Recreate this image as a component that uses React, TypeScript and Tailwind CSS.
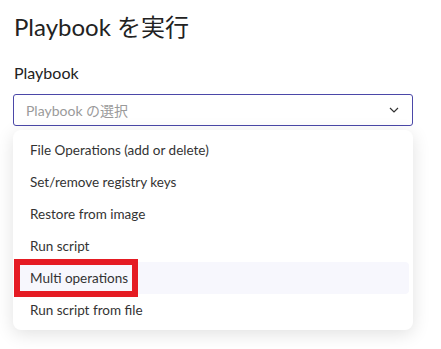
import React from "react"

const items = [
  "File Operations (add or delete)",
  "Set/remove registry keys",
  "Restore from image",
  "Run script",
  "Multi operations",
  "Run script from file",
]

export default function App() {
  return (
    <div
      className="relative h-[349px] w-[441px] bg-white px-[13px] text-[#222]"
      style={{ fontFamily: "Lato, 'Noto Sans CJK JP', sans-serif" }}
    >
      <h1 className="pt-[11px] pl-[1px] text-[24px] leading-[32px]">Playbook を実行</h1>
      <div className="mt-[19px] pl-[1px] text-[16px] leading-[22px]">Playbook</div>
      <div className="mt-[10px] flex h-[32px] w-[400px] items-center justify-between rounded-[3px] border border-[#4b48a8] pl-[12px] pr-[12px]">
        <span className="text-[14px] text-[#9a9a9a]">Playbook の選択</span>
        <svg width="10" height="6" viewBox="0 0 10 6" className="mr-[1px]">
          <path d="M1 1 L5 5 L9 1" fill="none" stroke="#333" strokeWidth="1.2" />
        </svg>
      </div>
      <ul className="mt-[4px] w-[400px] rounded-[8px] bg-white px-[4px] py-[4px] shadow-[0_4px_18px_rgba(0,0,0,0.12)]">
        {items.map((item) => (
          <li
            key={item}
            className={
              "flex h-[32px] items-center rounded-[4px] pl-[13px] text-[13.5px] text-[#333] " +
              (item === "Multi operations" ? "bg-[#f7f7fd]" : "")
            }
          >
            {item}
          </li>
        ))}
      </ul>
      {/* annotation box */}
      <div className="absolute left-[14px] top-[259px] h-[38px] w-[124px] border-[6px] border-[#e51b23]" />
    </div>
  )
}
